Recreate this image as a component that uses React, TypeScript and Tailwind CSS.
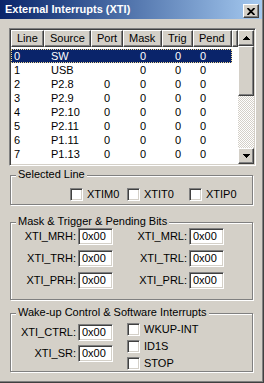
import React from "react";

/*
  External Interrupts (XTI) — classic Win2000-style peripheral dialog.
  Title bar, list of interrupt lines, and three etched group boxes.
*/

const rows = [
  ["0", "SW", "", "0", "0", "0"],
  ["1", "USB", "", "0", "0", "0"],
  ["2", "P2.8", "0", "0", "0", "0"],
  ["3", "P2.9", "0", "0", "0", "0"],
  ["4", "P2.10", "0", "0", "0", "0"],
  ["5", "P2.11", "0", "0", "0", "0"],
  ["6", "P1.11", "0", "0", "0", "0"],
  ["7", "P1.13", "0", "0", "0", "0"],
];

const headers = ["Line", "Source", "Port", "Mask", "Trig", "Pend"];
const cellPad = ["pl-[3px]", "pl-[7px]", "pl-[13px]", "pl-[17px]", "pl-[13px]", "pl-[7px]"];

const sunken =
  "border border-t-[#808080] border-l-[#808080] border-r-white border-b-white shadow-[inset_1px_1px_0_#404040,inset_-1px_-1px_0_#d4d0c8]";
const raised =
  "border border-t-white border-l-white border-r-[#404040] border-b-[#404040] shadow-[inset_-1px_-1px_0_#808080]";

function Arrow({ down }: { down?: boolean }) {
  return (
    <svg width="7" height="4" viewBox="0 0 7 4" shapeRendering="crispEdges">
      <polygon points={down ? "0,0 7,0 3.5,4" : "0,4 7,4 3.5,0"} fill="#000" />
    </svg>
  );
}

function Group({ title, className, children }: { title: string; className: string; children?: React.ReactNode }) {
  return (
    <div
      className={`relative ml-[10px] w-[243px] border border-[#808080] shadow-[inset_1px_1px_0_#fff,1px_1px_0_#fff] ${className}`}
    >
      {/* caption sits over the etched top line */}
      <span className="absolute left-[5px] top-[-8px] bg-[#d4d0c8] px-[2px] leading-[13px]">{title}</span>
      {children}
    </div>
  );
}

function Check({ label, className = "" }: { label: string; className?: string }) {
  return (
    <div className={`flex items-center gap-[4px] ${className}`}>
      <span className={`h-[13px] w-[13px] bg-white ${sunken}`} />
      <span>{label}</span>
    </div>
  );
}

function Field({ label, labelW }: { label: string; labelW: string }) {
  return (
    <div className="flex items-center">
      <span className={`${labelW} pr-[2px] text-right`}>{label}</span>
      <span className={`flex h-[17px] w-[35px] items-center bg-white pl-[3px] ${sunken}`}>0x00</span>
    </div>
  );
}

export default function App() {
  return (
    <div className="h-[383px] w-[264px] border-b border-r border-[#404040] font-['Liberation_Sans',Arial,sans-serif] text-[11px] text-black">
      <div className="flex h-full flex-col border-b border-r border-[#808080] bg-[#d4d0c8]">
        {/* Title bar */}
        <div className="flex h-[19px] items-start justify-between bg-gradient-to-r from-[#0a246a] to-[#a6caf0]">
          <span className="pl-[5px] pt-[3px] text-[11px] font-bold leading-[13px] text-white">External Interrupts (XTI)</span>
          <span className={`mr-[3px] mt-[4px] flex h-[14px] w-[16px] items-center justify-center bg-[#d4d0c8] ${raised}`}>
            <svg width="8" height="7" viewBox="0 0 8 7">
              <path d="M0.5 0 L7.5 7 M7.5 0 L0.5 7" stroke="#000" strokeWidth="1.8" />
            </svg>
          </span>
        </div>

        {/* Interrupt line list */}
        <div className={`ml-[9px] mt-[9px] flex h-[138px] w-[247px] bg-white p-[1px] ${sunken}`}>
          <div className="flex w-[227px] flex-col">
            <div className="flex h-[17px] shrink-0">
              <div className="grid grid-cols-[33px_47px_32px_39px_31px_39px]">
                {headers.map((h) => (
                  <div key={h} className={`bg-[#d4d0c8] pl-[5px] leading-[14px] ${raised}`}>
                    {h}
                  </div>
                ))}
              </div>
              <div className={`flex-1 bg-[#d4d0c8] ${raised}`} />
            </div>
            <div className="pt-[2px]">
              {rows.map((r, i) => (
                <div
                  key={r[0]}
                  className={`grid h-[14px] w-[221px] grid-cols-[33px_47px_32px_39px_31px_39px] leading-[14px] ${
                    i === 0 ? "bg-[#0a246a] text-white outline-1 -outline-offset-1 outline-dotted outline-[#f0d890]" : ""
                  }`}
                >
                  {r.map((c, j) => (
                    <span key={j} className={cellPad[j]}>
                      {c}
                    </span>
                  ))}
                </div>
              ))}
            </div>
          </div>
          {/* Vertical scrollbar */}
          <div className="flex w-[16px] flex-col">
            <div className={`flex h-[16px] items-center justify-center bg-[#d4d0c8] ${raised}`}>
              <Arrow />
            </div>
            <div className={`h-[50px] bg-[#d4d0c8] ${raised}`} />
            <div className="flex-1 bg-[repeating-conic-gradient(#ffffff_0_25%,#d4d0c8_0_50%)] bg-[length:2px_2px]" />
            <div className={`flex h-[16px] items-center justify-center bg-[#d4d0c8] ${raised}`}>
              <Arrow down />
            </div>
          </div>
        </div>

        <Group title="Selected Line" className="mt-[9px] h-[30px]">
          <div className="flex pl-[59px] pt-[10px]">
            <Check label="XTIM0" className="w-[57px]" />
            <Check label="XTIT0" className="w-[62px]" />
            <Check label="XTIP0" />
          </div>
        </Group>

        <Group title="Mask & Trigger & Pending Bits" className="mt-[17px] h-[78px]">
          <div className="grid grid-cols-[102px_111px] gap-y-[5px] pt-[5px]">
            <Field label="XTI_MRH:" labelW="w-[67px]" />
            <Field label="XTI_MRL:" labelW="w-[76px]" />
            <Field label="XTI_TRH:" labelW="w-[67px]" />
            <Field label="XTI_TRL:" labelW="w-[76px]" />
            <Field label="XTI_PRH:" labelW="w-[67px]" />
            <Field label="XTI_PRL:" labelW="w-[76px]" />
          </div>
        </Group>

        <Group title="Wake-up Control & Software Interrupts" className="mt-[13px] h-[59px]">
          <div className="flex">
            <div className="flex flex-col gap-[4px] pt-[10px]">
              <Field label="XTI_CTRL:" labelW="w-[67px]" />
              <Field label="XTI_SR:" labelW="w-[67px]" />
            </div>
            <div className="ml-[14px] flex flex-col pt-[7px]">
              <Check label="WKUP-INT" className="h-[17px]" />
              <Check label="ID1S" className="h-[17px]" />
              <Check label="STOP" className="h-[17px]" />
            </div>
          </div>
        </Group>
      </div>
    </div>
  );
}
